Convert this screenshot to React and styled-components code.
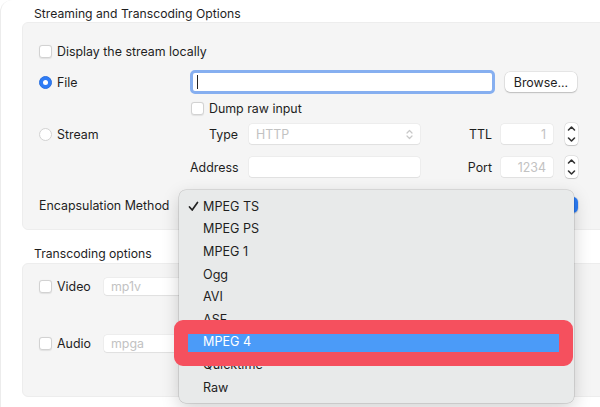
import React from 'react';
import styled, { createGlobalStyle } from 'styled-components';

const GlobalStyle = createGlobalStyle`
  html, body {
    margin: 0;
    padding: 0;
    background: #fff;
  }
  body {
    font-family: Inter, "Noto Sans", sans-serif;
    font-size: 12.4px;
    color: #1e1e1e;
    -webkit-font-smoothing: antialiased;
  }
`;

const Window = styled.div`
  position: relative;
  width: 600px;
  height: 407px;
  overflow: hidden;
  box-sizing: border-box;
  padding-left: 21px;
  background: #fff;
  border-left: 1px solid #ececec;
  border-top-left-radius: 12px;
`;

const Heading = styled.div`
  height: 16px;
  line-height: 16px;
  margin: ${p => p.$top}px 0 0 12px;
  font-size: 12.2px;
`;

const Group = styled.div`
  width: 590px;
  flex-shrink: 0;
  box-sizing: border-box;
  margin-top: ${p => p.$top || 0}px;
  padding: ${p => p.$pad};
  background: #f5f5f5;
  border: 1px solid #ededed;
  border-radius: 6px;
  display: flex;
  flex-direction: column;
`;

const Row = styled.div`
  display: flex;
  align-items: center;
  height: ${p => p.$h}px;
  margin-top: ${p => p.$gap || 0}px;
`;

const Lead = styled.div`
  width: ${p => p.$w || 151}px;
  flex-shrink: 0;
  display: flex;
  align-items: center;
  gap: 5px;
`;

const Check = styled.span`
  width: 13px;
  height: 13px;
  box-sizing: border-box;
  flex-shrink: 0;
  margin-left: ${p => p.$ml || 0}px;
  background: #fff;
  border: 1px solid #d2d2d2;
  border-radius: 3px;
  box-shadow: 0 0.5px 1px rgba(0, 0, 0, 0.08);
`;

const Radio = styled.span`
  width: 13px;
  height: 13px;
  box-sizing: border-box;
  flex-shrink: 0;
  border-radius: 50%;
  display: flex;
  align-items: center;
  justify-content: center;
  background: ${p => (p.$on ? '#2f7cf6' : '#fff')};
  border: 1px solid ${p => (p.$on ? '#2a70e0' : '#d2d2d2')};
  &::after {
    content: '';
    display: ${p => (p.$on ? 'block' : 'none')};
    width: 5px;
    height: 5px;
    border-radius: 50%;
    background: #fff;
  }
`;

const Label = styled.span`
  white-space: nowrap;
`;

const FocusInput = styled.div`
  width: 305px;
  height: 24px;
  box-sizing: border-box;
  border: 3px solid #86aff0;
  border-radius: 5px;
  background: #fff;
  display: flex;
  align-items: center;
  padding-left: 4px;
  &::before {
    content: '';
    width: 1px;
    height: 14px;
    background: #222;
  }
`;

const Button = styled.div`
  width: 72px;
  height: 20px;
  margin-left: 10px;
  border-radius: 5px;
  background: #fff;
  box-shadow: 0 0 0 0.5px rgba(0, 0, 0, 0.12), 0 1px 1.5px rgba(0, 0, 0, 0.18);
  display: flex;
  align-items: center;
  justify-content: center;
`;

const FieldLabel = styled.span`
  width: ${p => p.$w}px;
  flex-shrink: 0;
  text-align: right;
  margin-right: ${p => p.$mr}px;
  white-space: nowrap;
`;

const Field = styled.div`
  width: ${p => p.$w}px;
  height: ${p => p.$h || 20}px;
  box-sizing: border-box;
  flex-shrink: 0;
  background: #fff;
  border-radius: 3px;
  box-shadow: 0 0 0 0.5px rgba(0, 0, 0, 0.06), 0 0.5px 1px rgba(0, 0, 0, 0.06);
  display: flex;
  align-items: center;
  justify-content: ${p => (p.$right ? 'flex-end' : 'space-between')};
  padding: 0 7px;
  color: #c2c2c2;
`;

const Stepper = styled.div`
  width: 13px;
  height: 22px;
  margin-left: 12px;
  border-radius: 4px;
  background: #fff;
  box-shadow: 0 0 0 0.5px rgba(0, 0, 0, 0.12), 0 0.5px 1px rgba(0, 0, 0, 0.15);
  display: flex;
  flex-direction: column;
  align-items: center;
  justify-content: space-between;
  padding: 2px 0;
  box-sizing: border-box;
`;

const PopUp = styled.div`
  width: 394px;
  height: 16px;
  border-radius: 5px;
  background: #fff;
  box-shadow: 0 0 0 0.5px rgba(0, 0, 0, 0.12), 0 1px 1.5px rgba(0, 0, 0, 0.15);
  display: flex;
  justify-content: flex-end;
  &::after {
    content: '';
    width: 16px;
    height: 16px;
    border-radius: 5px;
    background: #2b7cf6;
  }
`;

const Menu = styled.div`
  position: absolute;
  left: 178px;
  top: 190px;
  width: 395px;
  padding: 5px 0;
  box-sizing: border-box;
  background: #e8eaea;
  border-radius: 7px;
  box-shadow: 0 0 0 0.5px rgba(0, 0, 0, 0.18), 0 6px 18px rgba(0, 0, 0, 0.18);
`;

const Item = styled.div`
  position: relative;
  height: 22.6px;
  margin: 0 5px;
  padding-left: 19px;
  display: flex;
  align-items: center;
  border-radius: 4px;
  font-size: 12.6px;
  background: ${p => (p.$active ? '#4b9bf8' : 'transparent')};
  color: ${p => (p.$active ? '#fff' : '#1e1e1e')};
`;

const Tick = styled.svg`
  position: absolute;
  left: 4px;
  top: 6px;
`;

const Annotation = styled.div`
  position: absolute;
  left: 173px;
  top: 320px;
  width: 399px;
  height: 46px;
  box-sizing: border-box;
  border: 14px solid #f5505e;
  border-radius: 9px;
`;

const Chevron = ({ up }) => (
  <svg width="9" height="7" viewBox="0 0 9 7">
    <path
      d={up ? 'M1.5 5L4.5 2L7.5 5' : 'M1.5 2L4.5 5L7.5 2'}
      fill="none"
      stroke="#333"
      strokeWidth="1.6"
      strokeLinecap="round"
      strokeLinejoin="round"
    />
  </svg>
);

const UpDown = () => (
  <svg width="7" height="11" viewBox="0 0 7 11">
    <path
      d="M1 4L3.5 1.5L6 4M1 7L3.5 9.5L6 7"
      fill="none"
      stroke="#c8c8c8"
      strokeWidth="1.2"
      strokeLinecap="round"
      strokeLinejoin="round"
    />
  </svg>
);

const formats = ['MPEG TS', 'MPEG PS', 'MPEG 1', 'Ogg', 'AVI', 'ASF', 'MPEG 4', 'Quicktime', 'Raw'];

export default function App() {
  return (
    <>
      <GlobalStyle />
      <Window>
        <Heading $top={6}>Streaming and Transcoding Options</Heading>
        <Group $pad="19px 0 14px 16px">
          <Row $h={18}>
            <Lead>
              <Check />
              <Label>Display the stream locally</Label>
            </Lead>
          </Row>
          <Row $h={24} $gap={10}>
            <Lead>
              <Radio $on />
              <Label>File</Label>
            </Lead>
            <FocusInput />
            <Button>Browse...</Button>
          </Row>
          <Row $h={16} $gap={6}>
            <Lead />
            <Lead $w={200}>
              <Check $ml={1} />
              <Label>Dump raw input</Label>
            </Lead>
          </Row>
          <Row $h={20} $gap={8}>
            <Lead>
              <Radio />
              <Label>Stream</Label>
            </Lead>
            <FieldLabel $w={48} $mr={11}>Type</FieldLabel>
            <Field $w={171}>
              HTTP
              <UpDown />
            </Field>
            <FieldLabel $w={72} $mr={9}>TTL</FieldLabel>
            <Field $w={52} $right>1</Field>
            <Stepper>
              <Chevron up />
              <Chevron />
            </Stepper>
          </Row>
          <Row $h={20} $gap={13}>
            <Lead />
            <FieldLabel $w={48} $mr={11}>Address</FieldLabel>
            <Field $w={171} />
            <FieldLabel $w={72} $mr={9}>Port</FieldLabel>
            <Field $w={52} $right>1234</Field>
            <Stepper>
              <Chevron up />
              <Chevron />
            </Stepper>
          </Row>
          <Row $h={20} $gap={18}>
            <Lead $w={145}>
              <Label>Encapsulation Method</Label>
            </Lead>
            <PopUp />
          </Row>
        </Group>
        <Heading $top={16}>Transcoding options</Heading>
        <Group $top={1} $pad="13px 0 44px 16px">
          <Row $h={18}>
            <Lead $w={65}>
              <Check />
              <Label>Video</Label>
            </Lead>
            <Field $w={300} $h={17}>mp1v</Field>
          </Row>
          <Row $h={18} $gap={39}>
            <Lead $w={65}>
              <Check />
              <Label>Audio</Label>
            </Lead>
            <Field $w={300} $h={17}>mpga</Field>
          </Row>
        </Group>
        <Menu>
          {formats.map(f => (
            <Item key={f} $active={f === 'MPEG 4'}>
              {f === 'MPEG TS' && (
                <Tick width="11" height="11" viewBox="0 0 11 11">
                  <path
                    d="M1.5 6L4.2 9L9.5 1.5"
                    fill="none"
                    stroke="#222"
                    strokeWidth="1.7"
                    strokeLinecap="round"
                    strokeLinejoin="round"
                  />
                </Tick>
              )}
              {f}
            </Item>
          ))}
        </Menu>
        <Annotation />
      </Window>
    </>
  );
}
